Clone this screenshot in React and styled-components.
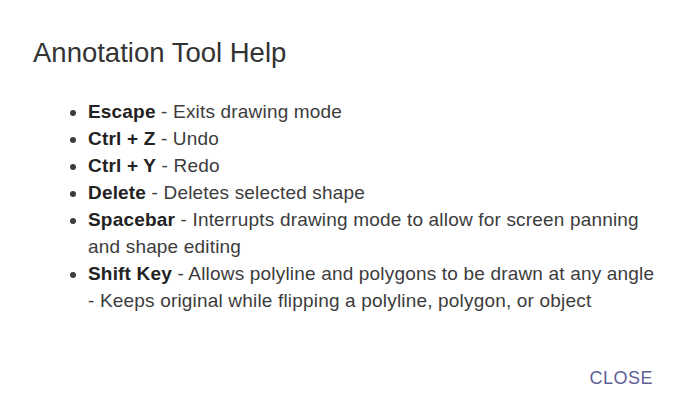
import React from "react";
import styled, { createGlobalStyle } from "styled-components";

const Global = createGlobalStyle`
  html, body { margin: 0; padding: 0; background: #fff; }
  body { font-family: "Liberation Sans", Arial, sans-serif; }
`;

const Dialog = styled.div`
  width: 688px;
  height: 414px;
  box-sizing: border-box;
  display: flex;
  flex-direction: column;
  background: #fff;
`;

const Title = styled.h2`
  margin: 0;
  padding: 37px 0 0 33px;
  font-size: 27.5px;
  line-height: 32px;
  font-weight: 400;
  color: #333;
`;

const Content = styled.div`
  flex: 1;
  padding: 29px 0 0 33px;
  width: 668px;
  box-sizing: border-box;
`;

const List = styled.ul`
  margin: 0;
  padding-left: 55px;
  font-size: 19px;
  line-height: 27px;
  letter-spacing: 0.18px;
  color: #3c3c3c;
`;

const Item = styled.li``;

const Key = styled.b`
  font-weight: 700;
  color: #222;
`;

const Actions = styled.div`
  display: flex;
  justify-content: flex-end;
  padding: 0 35px 24px 0;
`;

const CloseButton = styled.button`
  border: none;
  background: none;
  padding: 0;
  font-family: "Liberation Sans", Arial, sans-serif;
  font-size: 18px;
  line-height: 24px;
  letter-spacing: 0.5px;
  color: #5f5f97;
  text-transform: uppercase;
  cursor: pointer;
`;

const items = [
  { k: "Escape", t: "Exits drawing mode" },
  { k: "Ctrl + Z", t: "Undo" },
  { k: "Ctrl + Y", t: "Redo" },
  { k: "Delete", t: "Deletes selected shape" },
  { k: "Spacebar", t: "Interrupts drawing mode to allow for screen panning and shape editing" },
  {
    k: "Shift Key",
    t: (
      <>
        Allows polyline and polygons to be drawn at any angle
        <br />- Keeps original while flipping a polyline, polygon, or object
      </>
    ),
  },
];

export default function App() {
  return (
    <>
      <Global />
      <Dialog>
        <Title>Annotation Tool Help</Title>
        <Content>
          <List>
            {items.map((it) => (
              <Item key={it.k}>
                <Key>{it.k}</Key> - {it.t}
              </Item>
            ))}
          </List>
        </Content>
        <Actions>
          <CloseButton>Close</CloseButton>
        </Actions>
      </Dialog>
    </>
  );
}
